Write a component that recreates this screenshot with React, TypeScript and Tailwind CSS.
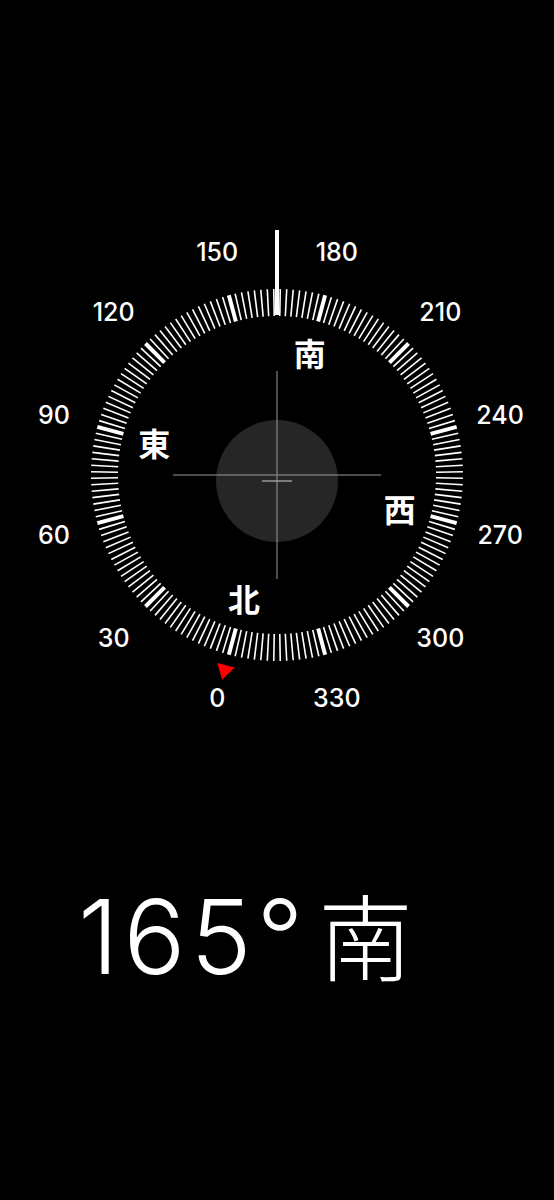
import React from "react";

const CX = 277;
const CY = 250;
const HEADING = 165;

const polar = (deg: number, r: number) => {
  const t = ((deg - HEADING) * Math.PI) / 180;
  return { x: CX + r * Math.sin(t), y: CY - r * Math.cos(t) };
};

const numbers = [0, 30, 60, 90, 120, 150, 180, 210, 240, 270, 300, 330];
const cardinals = [
  { deg: 0, label: "北" },
  { deg: 90, label: "東" },
  { deg: 180, label: "南" },
  { deg: 270, label: "西" },
];

const Dial = () => {
  const ticks = [];
  for (let d = 0; d < 360; d += 2) {
    const a = polar(d, 159);
    const b = polar(d, 186);
    const major = d % 30 === 0;
    ticks.push(
      <line key={d} x1={a.x} y1={a.y} x2={b.x} y2={b.y} stroke="#fff" strokeWidth={major ? 4 : 1.6} />
    );
  }
  const tri = polar(0, 202);
  const rot = 0 - HEADING;

  return (
    <svg width="554" height="500" viewBox="0 0 554 500" className="absolute left-0 top-0">
      {ticks}
      <line x1={CX} y1={5} x2={CX} y2={90} stroke="#fff" strokeWidth={4} />
      <circle cx={CX} cy={CY + 6} r={61} fill="#262626" />
      <line x1={CX - 104} y1={CY} x2={CX + 104} y2={CY} stroke="#9a9a9a" strokeWidth={1} />
      <line x1={CX} y1={CY - 104} x2={CX} y2={CY + 104} stroke="#9a9a9a" strokeWidth={1} />
      <line x1={CX - 15} y1={CY + 6} x2={CX + 15} y2={CY + 6} stroke="#9a9a9a" strokeWidth={1.5} />
      <g transform={`translate(${tri.x} ${tri.y}) rotate(${rot})`}>
        <polygon points="-9,5 9,5 0,-10" fill="#ff0000" />
      </g>
    </svg>
  );
};

export default function App() {
  return (
    <div className="flex h-[1200px] w-full flex-col overflow-hidden bg-black pt-[225px] text-white">
      <div className="relative h-[500px] w-[554px] shrink-0">
        <Dial />
        {numbers.map((n) => {
          const p = polar(n, 231);
          return (
            <span
              key={n}
              className="absolute -translate-x-1/2 -translate-y-1/2 font-['Inter','Liberation_Sans',sans-serif] text-[25px] font-medium leading-none"
              style={{ left: p.x, top: p.y }}
            >
              {n}
            </span>
          );
        })}
        {cardinals.map((c) => {
          const p = polar(c.deg, 127);
          return (
            <span
              key={c.deg}
              className="absolute -translate-x-1/2 -translate-y-1/2 font-['Noto_Sans_CJK_JP',sans-serif] text-[32px] font-bold leading-none"
              style={{ left: p.x, top: p.y }}
            >
              {c.label}
            </span>
          );
        })}
      </div>
      <div className="mt-[160px] flex items-baseline pl-[78px] font-['Inter','Noto_Sans_CJK_JP',sans-serif] text-[103px] font-light leading-none">
        <span className="tracking-[5px]">165</span>
        <span>°</span>
        <span className="ml-[15px] font-['Noto_Sans_CJK_JP',sans-serif] text-[94px] font-light">南</span>
      </div>
    </div>
  );
}
